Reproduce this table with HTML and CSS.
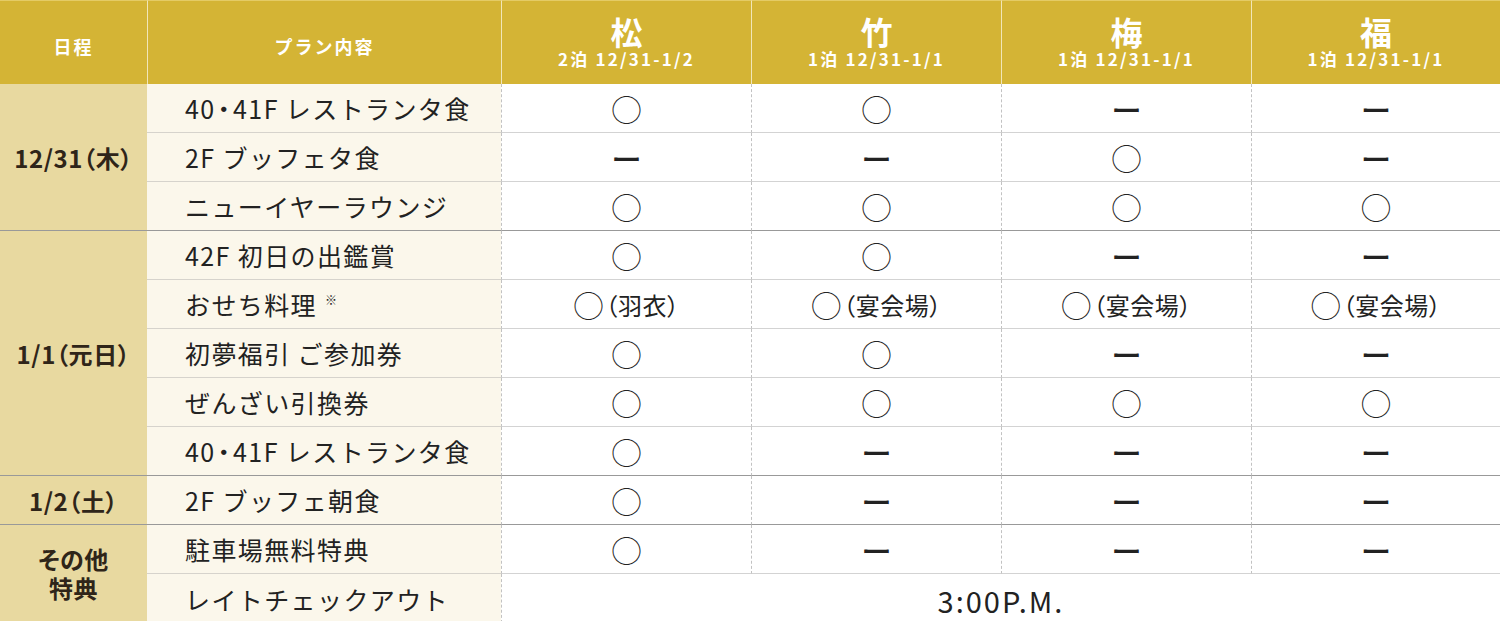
FILE: index.html
```html
<!DOCTYPE html>
<html lang="ja">
<head>
<meta charset="utf-8">
<title>プラン内容</title>
<link rel="stylesheet" href="styles.css">
</head>
<body>
<div class="plan-table">
  <div class="h h-date">日程</div>
  <div class="h h-plan">プラン内容</div>
  <div class="h h-tier"><span class="tier-name">松</span><span class="tier-sub">2泊 12/31-1/2</span></div>
  <div class="h h-tier"><span class="tier-name">竹</span><span class="tier-sub">1泊 12/31-1/1</span></div>
  <div class="h h-tier"><span class="tier-name">梅</span><span class="tier-sub">1泊 12/31-1/1</span></div>
  <div class="h h-tier"><span class="tier-name">福</span><span class="tier-sub">1泊 12/31-1/1</span></div>

  <div class="date span3 grp">12/31（木）</div>
  <div class="plan">40<span class="pt">・</span>41F レストランタ食</div>
  <div class="v"><span class="ok">◯</span></div>
  <div class="v"><span class="ok">◯</span></div>
  <div class="v"><span class="no">ー</span></div>
  <div class="v"><span class="no">ー</span></div>

  <div class="plan">2F ブッフェタ食</div>
  <div class="v"><span class="no">ー</span></div>
  <div class="v"><span class="no">ー</span></div>
  <div class="v"><span class="ok">◯</span></div>
  <div class="v"><span class="no">ー</span></div>

  <div class="plan grp">ニューイヤーラウンジ</div>
  <div class="v grp"><span class="ok">◯</span></div>
  <div class="v grp"><span class="ok">◯</span></div>
  <div class="v grp"><span class="ok">◯</span></div>
  <div class="v grp"><span class="ok">◯</span></div>

  <div class="date span5 grp">1/1（元日）</div>
  <div class="plan">42F 初日の出鑑賞</div>
  <div class="v"><span class="ok">◯</span></div>
  <div class="v"><span class="ok">◯</span></div>
  <div class="v"><span class="no">ー</span></div>
  <div class="v"><span class="no">ー</span></div>

  <div class="plan">おせち料理<span class="note">※</span></div>
  <div class="v"><span class="ok">◯</span><span class="place">（羽衣）</span></div>
  <div class="v"><span class="ok">◯</span><span class="place">（宴会場）</span></div>
  <div class="v"><span class="ok">◯</span><span class="place">（宴会場）</span></div>
  <div class="v"><span class="ok">◯</span><span class="place">（宴会場）</span></div>

  <div class="plan">初夢福引 ご参加券</div>
  <div class="v"><span class="ok">◯</span></div>
  <div class="v"><span class="ok">◯</span></div>
  <div class="v"><span class="no">ー</span></div>
  <div class="v"><span class="no">ー</span></div>

  <div class="plan">ぜんざい引換券</div>
  <div class="v"><span class="ok">◯</span></div>
  <div class="v"><span class="ok">◯</span></div>
  <div class="v"><span class="ok">◯</span></div>
  <div class="v"><span class="ok">◯</span></div>

  <div class="plan grp">40<span class="pt">・</span>41F レストランタ食</div>
  <div class="v grp"><span class="ok">◯</span></div>
  <div class="v grp"><span class="no">ー</span></div>
  <div class="v grp"><span class="no">ー</span></div>
  <div class="v grp"><span class="no">ー</span></div>

  <div class="date grp">1/2（土）</div>
  <div class="plan grp">2F ブッフェ朝食</div>
  <div class="v grp"><span class="ok">◯</span></div>
  <div class="v grp"><span class="no">ー</span></div>
  <div class="v grp"><span class="no">ー</span></div>
  <div class="v grp"><span class="no">ー</span></div>

  <div class="date span2 other"><span class="line">その他</span><span class="line">特典</span></div>
  <div class="plan">駐車場無料特典</div>
  <div class="v"><span class="ok">◯</span></div>
  <div class="v"><span class="no">ー</span></div>
  <div class="v"><span class="no">ー</span></div>
  <div class="v"><span class="no">ー</span></div>

  <div class="plan last">レイトチェックアウト</div>
  <div class="v wide last"><span class="time">3:00P.M.</span></div>
</div>
</body>
</html>
```
FILE: styles.css
```css
html, body {
  margin: 0;
  padding: 0;
  overflow: hidden;
  background: #ffffff;
}

body {
  font-family: "Noto Sans CJK JP", "Noto Sans", sans-serif;
  color: #222222;
}

.plan-table {
  display: grid;
  grid-template-columns: 147px 354px 250px 250px 250px 249px;
  grid-template-rows: 84px repeat(11, 49px);
  width: 1500px;
}

.h {
  background: #d4b435;
  color: #ffffff;
  font-weight: 700;
  display: flex;
  flex-direction: column;
  align-items: center;
  justify-content: center;
  border-top: 1px solid #e4cb66;
  box-sizing: border-box;
}

.h + .h {
  border-left: 1px solid #f1e6b8;
}

.h-date,
.h-plan {
  font-size: 18px;
  letter-spacing: 2px;
  padding-top: 6px;
}

.h-tier {
  gap: 2px;
  padding-bottom: 2px;
}

.tier-name {
  font-size: 32px;
  line-height: 32px;
}

.tier-sub {
  font-size: 17px;
  line-height: 20px;
  letter-spacing: 2.2px;
}

.date {
  background: #e8d9a0;
  color: #2f2519;
  font-size: 24px;
  font-weight: 700;
  letter-spacing: 0.6px;
  font-feature-settings: "palt";
  display: flex;
  flex-direction: column;
  align-items: center;
  justify-content: center;
  text-align: center;
  box-sizing: border-box;
  border-bottom: 1px solid #999691;
}

.span2 { grid-row: span 2; }
.span3 { grid-row: span 3; }
.span5 { grid-row: span 5; }

.other {
  border-bottom: none;
  padding-bottom: 2px;
}

.other .line {
  line-height: 29px;
  height: 29px;
  display: block;
  overflow: visible;
}

.plan {
  background: #fbf7eb;
  font-size: 25px;
  letter-spacing: 1.4px;
  padding-left: 38px;
  display: flex;
  align-items: center;
  box-sizing: border-box;
  border-bottom: 1px solid #d6d3cc;
}

.pt {
  font-feature-settings: "palt";
  letter-spacing: 3px;
  margin-left: 2px;
}

.note {
  font-size: 12px;
  align-self: flex-start;
  margin-top: 11px;
  margin-left: 8px;
}

.v {
  background: #ffffff;
  display: flex;
  align-items: center;
  justify-content: center;
  box-sizing: border-box;
  border-left: 1px dashed #c2c2c2;
  border-bottom: 1px solid #d3d3d3;
}

.grp {
  border-bottom: 1px solid #999999;
}

.last {
  border-bottom: none;
}

.ok {
  font-size: 30px;
  line-height: 1;
  color: #222222;
}

.no {
  font-size: 30px;
  line-height: 1;
  font-weight: 700;
  color: #222222;
  transform: scaleY(0.75);
  padding-top: 3px;
}

.place {
  font-size: 24px;
  letter-spacing: 0.5px;
  font-feature-settings: "palt";
  margin-left: 2px;
}

.wide {
  grid-column: span 4;
}

.time {
  font-size: 29px;
  letter-spacing: 2px;
  padding-top: 2px;
}
```
